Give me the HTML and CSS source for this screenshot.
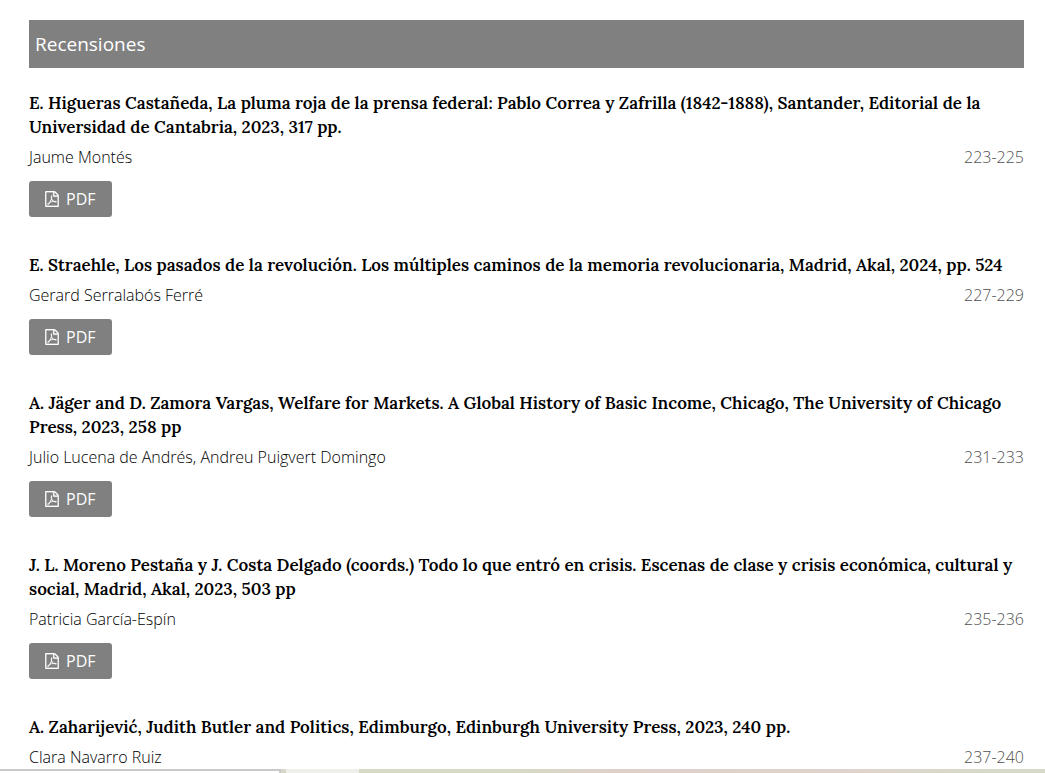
FILE: index.html
```
<!DOCTYPE html>
<html lang="es">
<head>
<meta charset="utf-8">
<meta name="viewport" content="width=device-width, initial-scale=1">
<title>Recensiones</title>
<link rel="stylesheet" href="styles.css">
</head>
<body>
<svg class="sprite" aria-hidden="true">
  <symbol id="pdf" viewBox="0 0 1536 1792">
    <path fill="currentColor" d="M1468 380q28 28 48 76t20 88v1152q0 40-28 68t-68 28H96q-40 0-68-28t-28-68V96q0-40 28-68T96 0h896q40 0 88 20t76 48zM1024 136v376h376q-10-29-22-41l-313-313q-12-12-41-22zM1408 1664V640H992q-40 0-68-28t-28-68V128H128v1536zM894 1071q33 26 84 56 59-7 117-7 147 0 177 49 16 22 2 52 0 1-1 2l-2 2v1q-6 38-71 38-48 0-115-20t-130-53q-221 24-392 83-153 262-242 262-15 0-28-7l-24-12q-1-1-6-5-10-10-6-36 9-40 56-91.500t132-96.500q14-9 23 6 2 2 2 4 52-85 107-197 68-136 104-262-24-82-30.500-159.500T656.500 552q11-40 42-40h22q23 0 35 15 18 21 9 68-2 6-4 8 1 3 1 8v30q-2 123-14 192 55 164 146 238zM318 1482q52-24 137-158-51 40-87.500 84T318 1482zM716 562q-15 42-2 132 1-7 7-44 0-3 7-43 1-4 4-8-1-1-1-2t-1-2-1-3q-1-22-13-36 0 1-1 4zM592 1223q135-54 284-81-2-1-13-9.500t-16-13.500q-76-67-127-176-27 86-83 197-30 56-45 83zM1238 1207q-24-24-140-24 76 28 124 28 14 0 18-1 0-1-2-3z"/>
  </symbol>
</svg>
<main class="section">
  <h2 class="section-title">Recensiones</h2>
  <ul class="articles">
    <li class="article">
      <h3 class="title"><a href="#">E. Higueras Castañeda, La pluma roja de la prensa federal: Pablo Correa y Zafrilla (1842-1888), Santander, Editorial de la Universidad de Cantabria, 2023, 317 pp.</a></h3>
      <div class="meta"><span>Jaume Montés</span><span class="pages">223-225</span></div>
      <a class="galley" href="#"><svg class="icon" aria-hidden="true"><use href="#pdf"/></svg>PDF</a>
    </li>
    <li class="article">
      <h3 class="title"><a href="#">E. Straehle, Los pasados de la revolución. Los múltiples caminos de la memoria revolucionaria, Madrid, Akal, 2024, pp. 524</a></h3>
      <div class="meta"><span>Gerard Serralabós Ferré</span><span class="pages">227-229</span></div>
      <a class="galley" href="#"><svg class="icon" aria-hidden="true"><use href="#pdf"/></svg>PDF</a>
    </li>
    <li class="article">
      <h3 class="title"><a href="#">A. Jäger and D. Zamora Vargas, Welfare for Markets. A Global History of Basic Income, Chicago, The University of Chicago Press, 2023, 258 pp</a></h3>
      <div class="meta"><span>Julio Lucena de Andrés, Andreu Puigvert Domingo</span><span class="pages">231-233</span></div>
      <a class="galley" href="#"><svg class="icon" aria-hidden="true"><use href="#pdf"/></svg>PDF</a>
    </li>
    <li class="article">
      <h3 class="title"><a href="#">J. L. Moreno Pestaña y J. Costa Delgado (coords.) Todo lo que entró en crisis. Escenas de clase y crisis económica, cultural y social, Madrid, Akal, 2023, 503 pp</a></h3>
      <div class="meta"><span>Patricia García-Espín</span><span class="pages">235-236</span></div>
      <a class="galley" href="#"><svg class="icon" aria-hidden="true"><use href="#pdf"/></svg>PDF</a>
    </li>
    <li class="article">
      <h3 class="title"><a href="#">A. Zaharijević, Judith Butler and Politics, Edimburgo, Edinburgh University Press, 2023, 240 pp.</a></h3>
      <div class="meta"><span>Clara Navarro Ruiz</span><span class="pages">237-240</span></div>
    </li>
  </ul>
</main>
<div class="edge"><div class="edge-status"></div><div class="edge-light"></div><div class="edge-tint"></div></div>
</body>
</html>
```
FILE: styles.css
```
body {
  margin: 0;
  background: #fff;
  color: #000;
  font: 300 16px/24px "Open Sans", sans-serif;
}
.sprite {
  display: none;
}
.section {
  padding: 20px 21px 0 29px;
}
.section-title {
  margin: 0 0 23px;
  padding: 12px 6px;
  background: #808080;
  color: #fff;
  font-size: 19px;
  font-weight: 400;
  line-height: 24px;
}
.articles {
  display: flex;
  flex-direction: column;
  gap: 36px;
  margin: 0;
  padding: 0;
  list-style: none;
}
.title {
  margin: 0 0 6px;
  font: 600 17px/24px "Lora", "Liberation Serif", serif;
}
.title a {
  color: #000;
  text-decoration: none;
}
.meta {
  display: flex;
  justify-content: space-between;
  gap: 24px;
}
.pages {
  color: #505050;
}
.galley {
  display: inline-flex;
  align-items: center;
  gap: 7px;
  margin-top: 12px;
  padding: 6px 16px;
  border-radius: 3px;
  background: #808080;
  color: #fff;
  font-weight: 400;
  text-decoration: none;
  vertical-align: top;
}
.icon {
  width: 14px;
  height: 16px;
  stroke: currentColor;
  stroke-width: 30;
}
.edge {
  position: fixed;
  inset: auto 0 0;
  display: flex;
  height: 4px;
}
.edge-status {
  box-sizing: border-box;
  width: 281px;
  border-top: 2px solid #c9cac8;
  border-right: 2px solid #c9cac8;
  background: #fff;
}
.edge-light {
  width: 78px;
  background: linear-gradient(90deg, #d8d7ca 5px, #eff0e9 5px);
}
.edge-tint {
  flex: 1;
  background: linear-gradient(90deg, #d7dac5 22%, #dfd0ca 38%, #dfd5cd 75%, #d7dac8 92%);
}
```
